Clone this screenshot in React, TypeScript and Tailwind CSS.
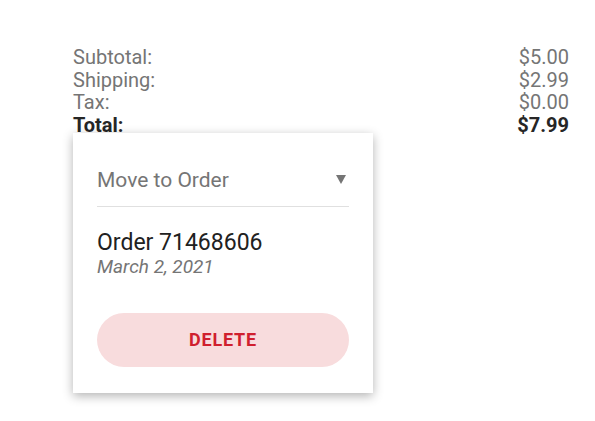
export default function App() {
  const rows = [
    { label: "Subtotal:", value: "$5.00" },
    { label: "Shipping:", value: "$2.99" },
    { label: "Tax:", value: "$0.00" },
  ]

  return (
    <div className="w-[595px] h-[421px] bg-white font-['Roboto',sans-serif] pt-[46px] pl-[73px] pr-[26px]">
      <div className="flex flex-col text-[20px] leading-[22.5px]">
        {rows.map((r) => (
          <div key={r.label} className="flex justify-between text-[#757575]">
            <span>{r.label}</span>
            <span>{r.value}</span>
          </div>
        ))}
        <div className="relative flex justify-between font-bold text-[#262626]">
          <span>Total:</span>
          <span>$7.99</span>
          <div className="absolute left-0 top-[19.5px] w-[300px] bg-white shadow-[0_3px_10px_rgba(0,0,0,0.3)] px-6 pt-[23px] pb-[26px] font-normal">
            <div className="flex items-center justify-between h-[51px] border-b border-[#e0e0e0] pb-[2px]">
              <span className="text-[21px] text-[#757575]">Move to Order</span>
              <svg width="10" height="9" viewBox="0 0 10 9" className="mr-[3px] -mt-[2px]">
                <path d="M0 0 H10 L5 9 Z" fill="#757575" />
              </svg>
            </div>
            <div className="pt-[23px] flex flex-col">
              <span className="text-[23px] leading-[26px] text-[#212121]">Order 71468606</span>
              <span className="text-[19px] leading-[22px] italic text-[#757575]">March 2, 2021</span>
            </div>
            <button className="mt-[35px] w-full h-[54px] rounded-full bg-[#f8dcdd] text-[#d01f2e] text-[18px] font-bold tracking-[0.8px]">
              DELETE
            </button>
          </div>
        </div>
      </div>
    </div>
  )
}
